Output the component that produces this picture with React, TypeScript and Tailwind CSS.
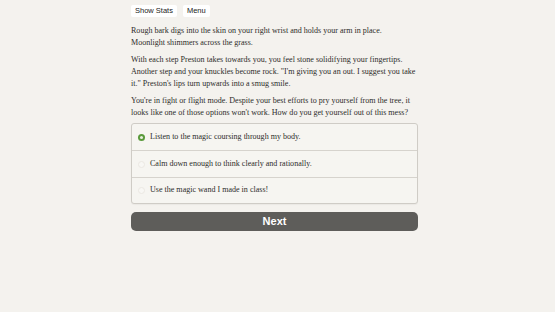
import { useState } from "react";

const OPTIONS = [
    "Listen to the magic coursing through my body.",
    "Calm down enough to think clearly and rationally.",
    "Use the magic wand I made in class!",
];

function Radio({ checked }: { checked: boolean }) {
    if (checked) {
        return (
            <span className="flex h-[7px] w-[7px] items-center justify-center rounded-full bg-[#5a9a3c]">
                <span className="h-[3px] w-[3px] rounded-full bg-[#e8efe0]" />
            </span>
        );
    }
    return <span className="h-[7px] w-[7px] rounded-full border border-[#ebe8e2] bg-[#f8f7f4]" />;
}

export default function App() {
    const [choice, setChoice] = useState(0);

    return (
        <div className="min-h-[312px] w-full bg-[#f4f2ee] font-['Liberation_Serif',serif] text-[#2e2d2b]">
            <div className="ml-[131px] w-[287px] pt-[5px]">
                <div className="flex gap-[6px] font-['Liberation_Sans',sans-serif] text-[7.5px] text-[#222]">
                    <button className="h-[12px] rounded-[2px] bg-white px-[4px] leading-[12px]">Show Stats</button>
                    <button className="h-[12px] rounded-[2px] bg-white px-[4px] leading-[12px]">Menu</button>
                </div>

                <div className="mt-[8px] space-y-[5px] text-[8.05px] leading-[12px]">
                    <p>
                        Rough bark digs into the skin on your right wrist and holds your arm in place.
                        <br />
                        Moonlight shimmers across the grass.
                    </p>
                    <p>
                        With each step Preston takes towards you, you feel stone solidifying your fingertips. Another step and
                        your knuckles become rock. "I'm giving you an out. I suggest you take it." Preston's lips turn upwards
                        into a smug smile.
                    </p>
                    <p>
                        You're in fight or flight mode. Despite your best efforts to pry yourself from the tree, it looks like
                        one of those options won't work. How do you get yourself out of this mess?
                    </p>
                </div>

                <div className="mt-[4px] overflow-hidden rounded-[3px] border border-[#cfccc6] bg-[#f6f5f1] shadow-[0_1px_1px_rgba(0,0,0,0.04)]">
                    {OPTIONS.map((text, i) => (
                        <button
                            key={text}
                            onClick={() => setChoice(i)}
                            className={`flex h-[26.4px] w-full items-center gap-[5px] px-[6px] text-left text-[8.05px] ${
                                i > 0 ? "border-t border-[#d6d3cd]" : ""
                            }`}
                        >
                            <Radio checked={choice === i} />
                            <span>{text}</span>
                        </button>
                    ))}
                </div>

                <button className="mt-[8px] flex h-[19px] w-full items-center justify-center rounded-[5px] bg-[#5e5d5a] font-['Liberation_Sans',sans-serif] text-[11px] font-bold text-white">
                    Next
                </button>
            </div>
        </div>
    );
}
